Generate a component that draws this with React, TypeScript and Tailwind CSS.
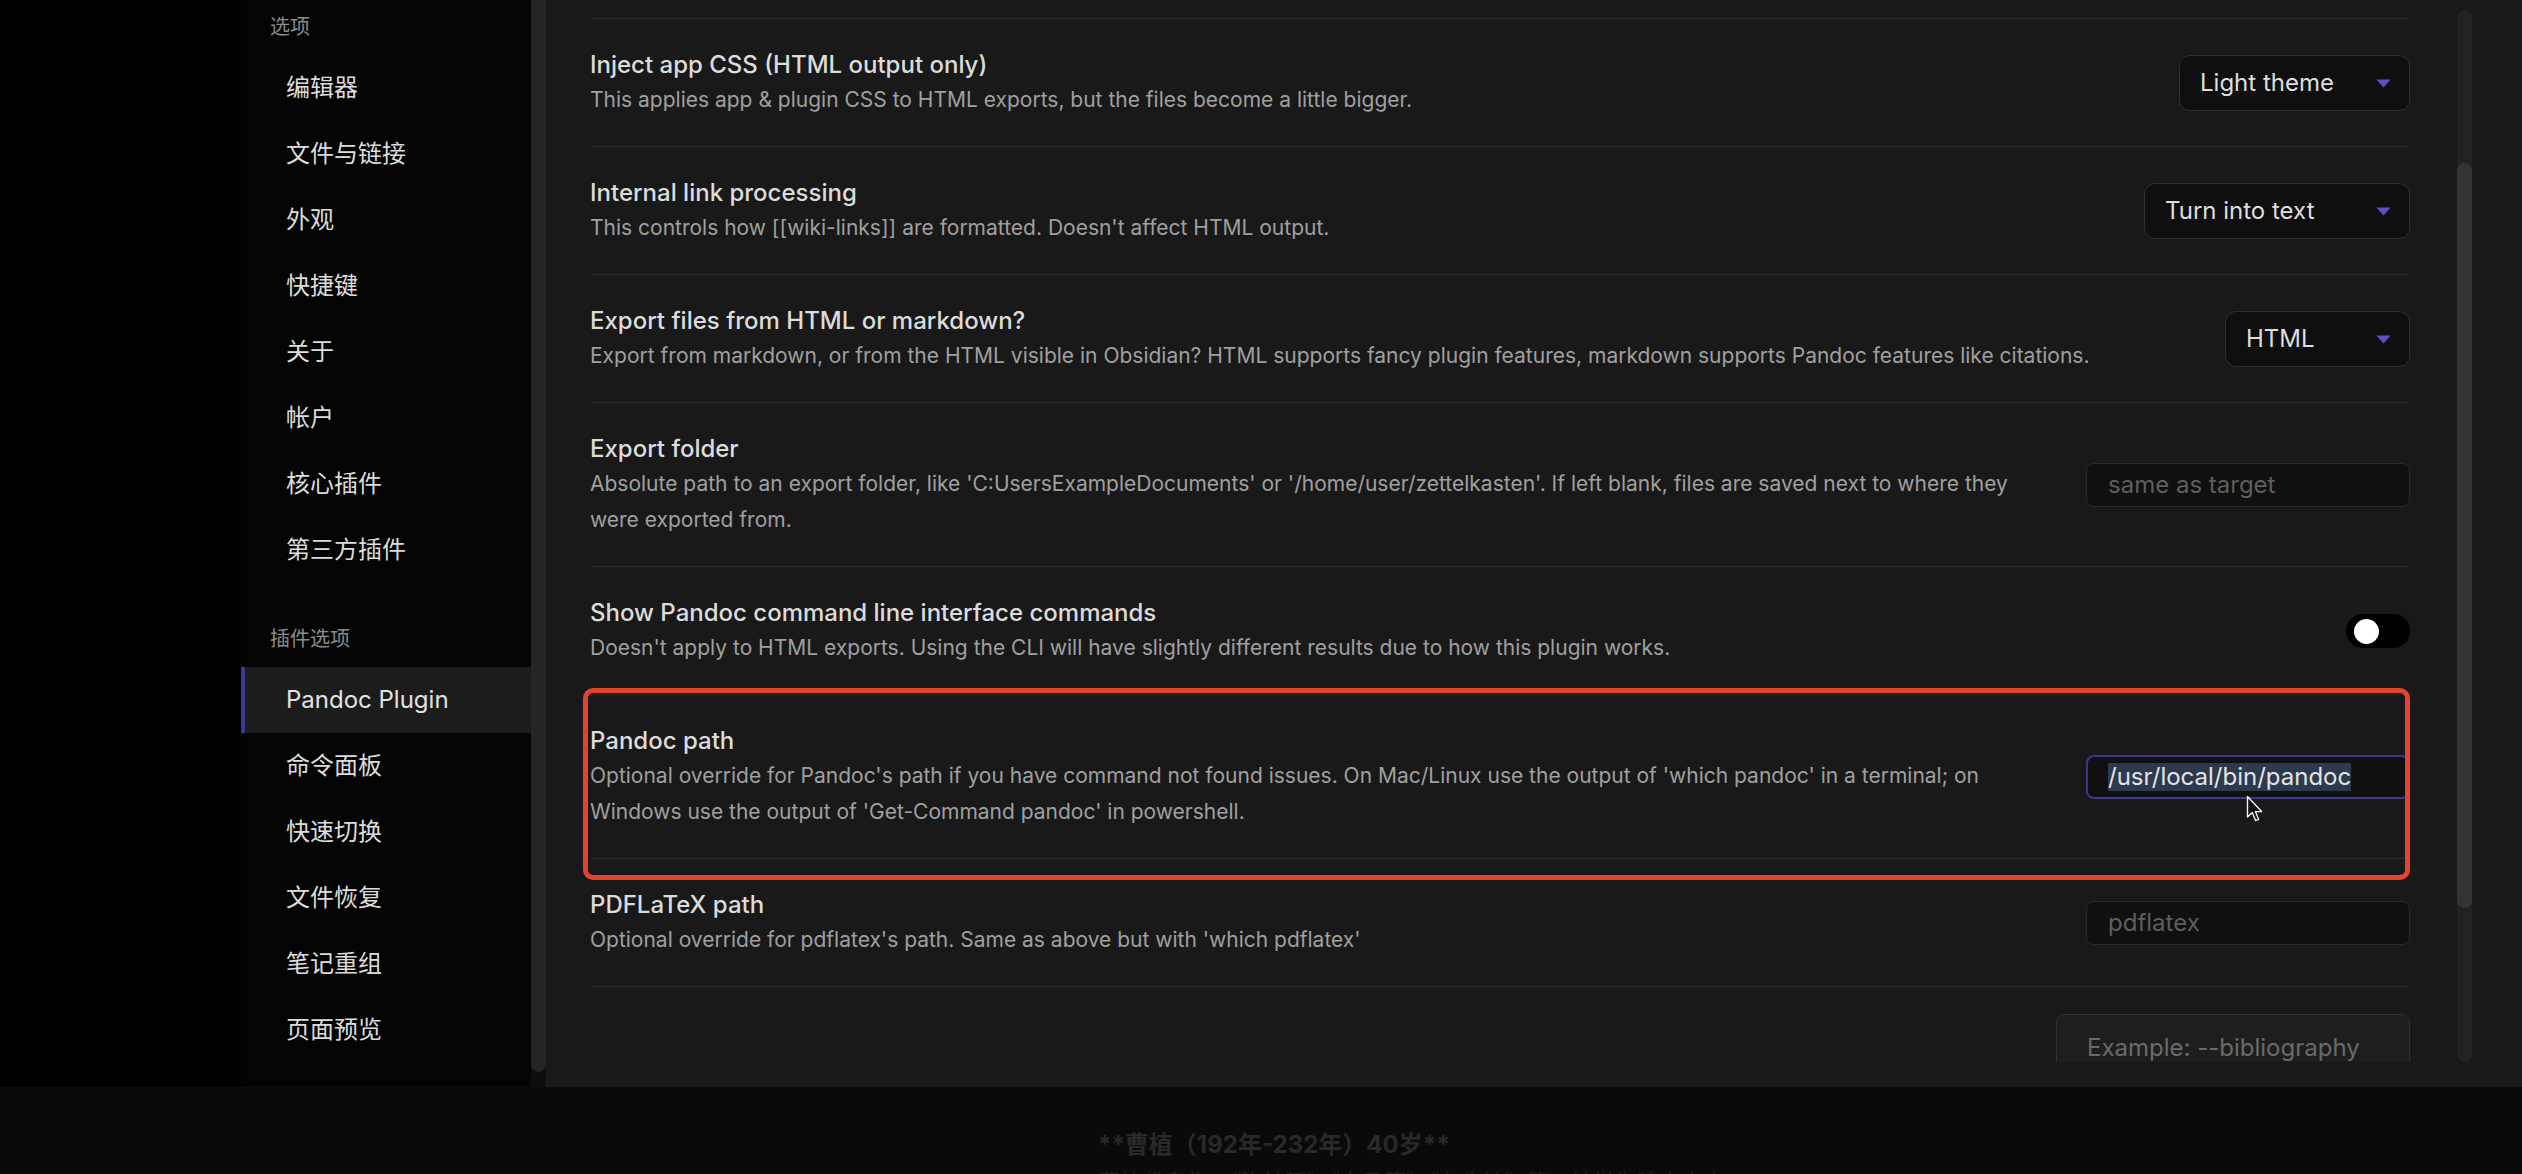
import type { ReactNode } from 'react';

const generalItems = ['编辑器', '文件与链接', '外观', '快捷键', '关于', '帐户', '核心插件', '第三方插件'];
const pluginItems = ['Pandoc Plugin', '命令面板', '快速切换', '文件恢复', '笔记重组', '页面预览'];

function Caret() {
     return (
          <svg width="15" height="9" viewBox="0 0 15 9" className="shrink-0">
               <path d="M0.5 0.5 L14.5 0.5 L7.5 8.5 Z" fill="#5a52c9" />
          </svg>
     );
}

function Dropdown({ label, width }: { label: string; width: string }) {
     return (
          <div
               className={`${width} flex h-[56px] items-center justify-between rounded-[11px] border border-[#2e2e2e] bg-[#0f0f0f] pl-[20px] pr-[18px] text-[24px] text-[#dedede]`}
          >
               <span>{label}</span>
               <Caret />
          </div>
     );
}

function TextInput({ placeholder }: { placeholder: string }) {
     return (
          <div className="flex h-[44px] w-[324px] items-center rounded-[8px] border border-[#2a2a2a] bg-[#101010] pl-[21px] text-[24px] text-[#5e5e5e]">
               {placeholder}
          </div>
     );
}

function Toggle() {
     return (
          <div className="flex h-[34px] w-[64px] items-center rounded-full bg-black pl-[8px]">
               <div className="h-[25px] w-[25px] rounded-full bg-white" />
          </div>
     );
}

function Row({ name, desc, control }: { name: string; desc: ReactNode; control: ReactNode }) {
     return (
          <div className="flex items-center border-t border-[#2a2a2a] pb-[28px] pt-[29px]">
               <div className="min-w-0 flex-1 pr-[64px]">
                    <div className="text-[24px] font-medium leading-[34px] text-[#dcdcdc]">{name}</div>
                    <div className="text-[21px] leading-[36px] text-[#a0a0a0]">{desc}</div>
               </div>
               <div className="shrink-0">{control}</div>
          </div>
     );
}

function SideItem({ label, active }: { label: string; active?: boolean }) {
     return (
          <div
               className={
                    active
                         ? 'flex h-[66px] items-center border-l-4 border-[#3a3a94] bg-[#1c1c1c] pl-[41px] text-[24px] text-[#e2e2e2]'
                         : 'flex h-[66px] items-center pl-[45px] text-[24px] text-[#dcdcdc]'
               }
          >
               {label}
          </div>
     );
}

function Sidebar() {
     return (
          <div className="w-[290px] shrink-0 bg-[#040404] pt-[10px]">
               <div className="flex h-[34px] items-center pl-[29px] text-[20px] text-[#8c8c8c]">选项</div>
               <div className="mt-[11px]">
                    {generalItems.map((item) => (
                         <SideItem key={item} label={item} />
                    ))}
               </div>
               <div className="mt-[39px] flex h-[34px] items-center pl-[29px] text-[20px] text-[#8c8c8c]">插件选项</div>
               <div className="mt-[11px]">
                    {pluginItems.map((item, i) => (
                         <SideItem key={item} label={item} active={i === 0} />
                    ))}
               </div>
          </div>
     );
}

export default function App() {
     return (
          <div className="relative flex h-[1174px] w-full flex-col overflow-hidden bg-[#0a0a0a] font-[family-name:Inter,'Noto_Sans_CJK_SC',sans-serif]">
               <div className="flex h-[1087px] shrink-0">
                    <div className="w-[241px] shrink-0 bg-black" />
                    <Sidebar />

                    {/* sidebar scrollbar */}
                    <div className="flex w-[15px] shrink-0 flex-col bg-[#0e0e0e]">
                         <div className="h-[1072px] rounded-b-full bg-[#252525]" />
                    </div>

                    <div className="flex min-w-0 flex-1 flex-col bg-[#191919]">
                         <div className="flex h-[1062px] overflow-hidden">
                              <div className="min-w-0 flex-1 overflow-hidden pl-[44px] pr-[47px]">
                                   <div className="h-[18px]" />
                                   <Row
                                        name="Inject app CSS (HTML output only)"
                                        desc="This applies app & plugin CSS to HTML exports, but the files become a little bigger."
                                        control={<Dropdown label="Light theme" width="w-[231px]" />}
                                   />
                                   <Row
                                        name="Internal link processing"
                                        desc="This controls how [[wiki-links]] are formatted. Doesn't affect HTML output."
                                        control={<Dropdown label="Turn into text" width="w-[266px]" />}
                                   />
                                   <Row
                                        name="Export files from HTML or markdown?"
                                        desc="Export from markdown, or from the HTML visible in Obsidian? HTML supports fancy plugin features, markdown supports Pandoc features like citations."
                                        control={<Dropdown label="HTML" width="w-[185px]" />}
                                   />
                                   <Row
                                        name="Export folder"
                                        desc="Absolute path to an export folder, like 'C:UsersExampleDocuments' or '/home/user/zettelkasten'. If left blank, files are saved next to where they were exported from."
                                        control={<TextInput placeholder="same as target" />}
                                   />
                                   <Row
                                        name="Show Pandoc command line interface commands"
                                        desc="Doesn't apply to HTML exports. Using the CLI will have slightly different results due to how this plugin works."
                                        control={<Toggle />}
                                   />
                                   <Row
                                        name="Pandoc path"
                                        desc="Optional override for Pandoc's path if you have command not found issues. On Mac/Linux use the output of 'which pandoc' in a terminal; on Windows use the output of 'Get-Command pandoc' in powershell."
                                        control={
                                             <div className="flex h-[44px] w-[324px] items-center rounded-[8px] border-2 border-[#3b378f] bg-[#101010] pl-[20px] text-[24px] text-[#e4e4e4]">
                                                  <span className="bg-[#2d394d] leading-[28px]">/usr/local/bin/pandoc</span>
                                             </div>
                                        }
                                   />
                                   <Row
                                        name="PDFLaTeX path"
                                        desc="Optional override for pdflatex's path. Same as above but with 'which pdflatex'"
                                        control={<TextInput placeholder="pdflatex" />}
                                   />
                                   <div className="flex justify-end border-t border-[#2a2a2a] pt-[27px]">
                                        <div className="h-[150px] w-[354px] rounded-[8px] border border-[#303030] bg-[#1e1e1e] pl-[30px] pt-[15px] text-[24px] text-[#6a6a6a]">
                                             Example: --bibliography
                                        </div>
                                   </div>
                              </div>

                              {/* content scrollbar */}
                              <div className="flex w-[15px] shrink-0 flex-col pt-[10px]">
                                   <div className="flex flex-1 flex-col rounded-full bg-[#222222]">
                                        <div className="mt-[153px] h-[745px] rounded-full bg-[#343434]" />
                                   </div>
                              </div>
                              <div className="w-[50px] shrink-0" />
                         </div>
                    </div>
               </div>

               {/* dimmed note behind the modal */}
               <div className="flex-1 pl-[1098px] pt-[41px]">
                    <div className="text-[24px] font-bold leading-[34px] text-[#292929]">**曹植（192年-232年）40岁**</div>
                    <div className="mt-[4px] text-[22px] leading-[32px] text-[#222222]">
                         曹植代表作：《洛神赋》《白马篇》《七步诗》等，被誉为建安之杰
                    </div>
               </div>

               {/* red annotation frame */}
               <div className="absolute left-[583px] top-[688px] h-[192px] w-[1827px] rounded-[10px] border-[5px] border-[#e4442f]" />

               {/* mouse pointer */}
               <svg className="absolute left-[2246px] top-[795px]" width="18" height="28" viewBox="0 0 18 28">
                    <path d="M1.5 1.5 L1.5 22 L6.3 17.6 L9.6 25.6 L12.6 24.4 L9.4 16.6 L15.6 16.6 Z" fill="#111" stroke="#f2f2f2" strokeWidth="1.4" strokeLinejoin="round" />
               </svg>
          </div>
     );
}
